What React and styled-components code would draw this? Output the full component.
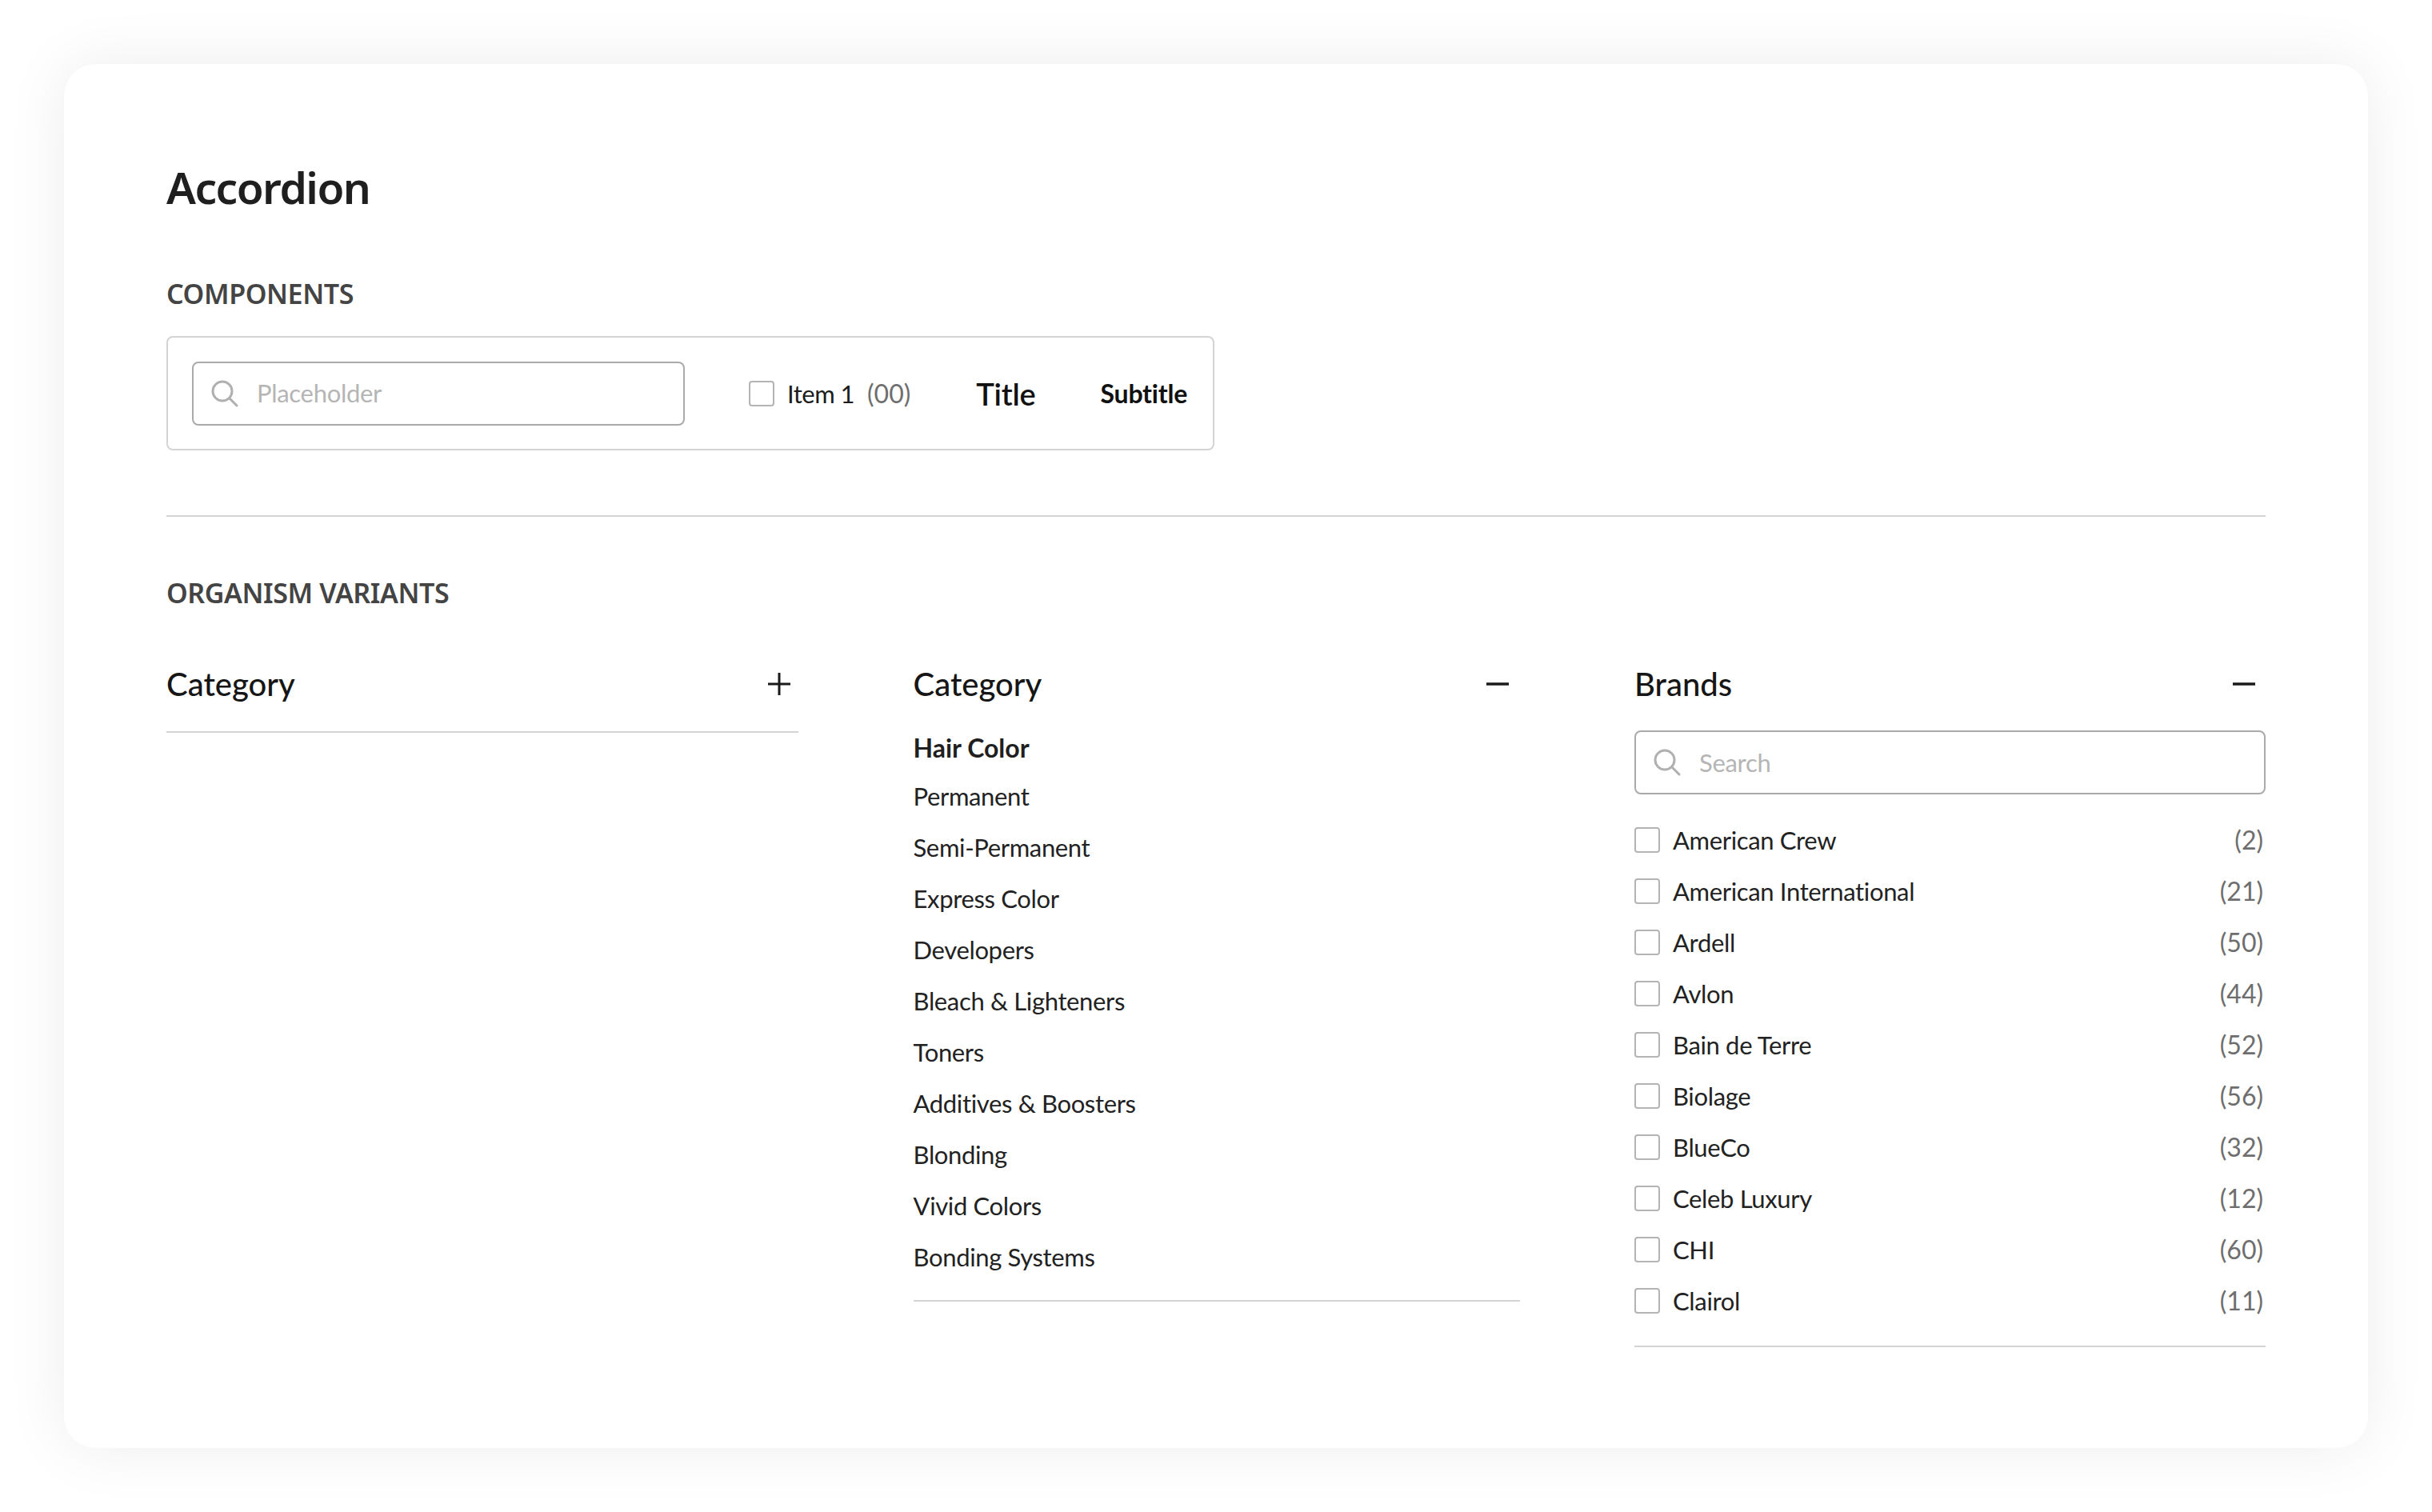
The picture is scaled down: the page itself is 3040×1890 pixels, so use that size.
import React from 'react';
import styled, { createGlobalStyle } from 'styled-components';

const Global = createGlobalStyle`
  html, body { margin: 0; padding: 0; background: #fff; }
  body { font-family: "Lato", "Liberation Sans", sans-serif; color: #1c1c1c; }
`;
const Page = styled.div`
  width: 3040px; height: 1890px; box-sizing: border-box; padding: 80px; overflow: hidden;
`;
const Card = styled.main`
  width: 2880px; height: 1730px; box-sizing: border-box; background: #fff; border-radius: 40px;
  box-shadow: 0 0 80px rgba(0,0,0,0.075);
  padding: 117px 128px 0 128px; display: flex; flex-direction: column;
`;
const Heading = styled.h1`
  margin: 0; font: 600 55px/74px "Noto Sans", sans-serif; letter-spacing: -1.5px; color: #1f1f1f;
`;
const SectionLabel = styled.h2`
  margin: ${p => p.$top}px 0 0; font: 600 34px/44px "Noto Sans", sans-serif; color: #444; letter-spacing: -0.4px;
`;
const Panel = styled.section`
  margin-top: 31px; width: 1310px; height: 143px; box-sizing: border-box; border: 2px solid #d4d4d4; border-radius: 8px;
  padding: 0 30px; display: flex; align-items: center;
`;
const SearchBox = styled.div`
  width: ${p => p.$width}; height: 80px; box-sizing: border-box; border: 2px solid #aaa; border-radius: 8px; flex: none;
  display: flex; align-items: center; padding-left: 21px; gap: 22px;
  font: 400 31px/1 "Lato", sans-serif; letter-spacing: -0.3px; color: #b5b5b5;
`;
const Box = styled.span`
  width: 32px; height: 32px; box-sizing: border-box; flex: none; border: 2px solid #b4b4b4; border-radius: 4px; display: block;
`;
const SampleItem = styled.div`
  margin-left: 80px; display: flex; align-items: center; font: 400 31px/44px "Lato", sans-serif; letter-spacing: -0.5px; white-space: pre;
`;
const Count = styled.span`
  color: #6e6e6e; font: 400 32px/44px "Lato", sans-serif; letter-spacing: 0;
`;
const SampleLabel = styled.span`margin: 0 16px;`;
const SampleTitle = styled.span`
  margin-left: 82px; font: 600 38px/50px "Lato", sans-serif; letter-spacing: -0.2px; color: #111;
`;
const SampleSubtitle = styled.span`
  margin-left: 81px; font: 700 32px/44px "Lato", sans-serif; letter-spacing: -0.2px; color: #111;
`;
const Divider = styled.hr`
  margin: 81px 0 0; border: 0; height: 2px; background: #d4d4d4; width: 100%;
`;
const Columns = styled.div`
  margin-top: 64px; display: grid; grid-template-columns: 790px 758px 789px; justify-content: space-between; align-items: start;
`;
const Col = styled.section`
  display: flex; flex-direction: column;
`;
const ColHeader = styled.header`
  height: 56px; display: flex; align-items: center; justify-content: space-between; padding-right: ${p => p.$pad}px;
  font: 500 40px/56px "Lato", sans-serif; color: #161616;
`;
const ToggleIcon = styled.svg`
  width: 28px; height: 28px; display: block; flex: none;
`;
const Rule = styled.div`
  height: 2px; background: #d4d4d4; margin-top: ${p => p.$top}px;
`;
const ListHead = styled.div`
  margin-top: 30px; font: 700 32px/44px "Lato", sans-serif; color: #1f1f1f;
`;
const Links = styled.ul`
  list-style: none; margin: 16px 0 0; padding: 0; display: flex; flex-direction: column; gap: 20px;
`;
const LinkRow = styled.li`
  font: 400 31px/44px "Lato", sans-serif; letter-spacing: -0.35px; color: #222;
`;
const SearchWrap = styled.div`margin-top: 30px;`;
const Brands = styled.ul`
  list-style: none; margin: 35px 0 0; padding: 0 3px 0 0; display: flex; flex-direction: column; gap: 20px;
`;
const BrandRow = styled.li`
  height: 44px; display: flex; align-items: center; gap: 16px; font: 400 31px/44px "Lato", sans-serif; letter-spacing: -0.35px; color: #222;
`;
const BrandName = styled.span`flex: 1;`;

const Magnifier = () => (
  <svg width="36" height="36" viewBox="0 0 36 36" fill="none" stroke="#b0b0b0" strokeWidth="3" strokeLinecap="round">
    <circle cx="15" cy="15" r="12" />
    <path d="M24 24l9 9" />
  </svg>
);
const Plus = () => (
  <ToggleIcon viewBox="0 0 28 28" fill="none" stroke="#1a1a1a" strokeWidth="3"><path d="M0 14h28M14 0v28" /></ToggleIcon>
);
const Minus = () => (
  <ToggleIcon viewBox="0 0 28 28" fill="none" stroke="#1a1a1a" strokeWidth="3.5"><path d="M0 14h28" /></ToggleIcon>
);

const categories = ['Permanent','Semi-Permanent','Express Color','Developers','Bleach & Lighteners','Toners','Additives & Boosters','Blonding','Vivid Colors','Bonding Systems'];
const brands = [['American Crew',2],['American International',21],['Ardell',50],['Avlon',44],['Bain de Terre',52],['Biolage',56],['BlueCo',32],['Celeb Luxury',12],['CHI',60],['Clairol',11]];

export default function App() {
  return (
    <Page>
      <Global />
      <Card>
        <Heading>Accordion</Heading>
        <SectionLabel $top={74}>COMPONENTS</SectionLabel>
        <Panel>
          <SearchBox $width="616px"><Magnifier />Placeholder</SearchBox>
          <SampleItem><Box /><SampleLabel>Item 1</SampleLabel><Count>(00)</Count></SampleItem>
          <SampleTitle>Title</SampleTitle>
          <SampleSubtitle>Subtitle</SampleSubtitle>
        </Panel>
        <Divider />
        <SectionLabel $top={73}>ORGANISM VARIANTS</SectionLabel>
        <Columns>
          <Col>
            <ColHeader $pad={10}>Category<Plus /></ColHeader>
            <Rule $top={31} />
          </Col>
          <Col>
            <ColHeader $pad={14}>Category<Minus /></ColHeader>
            <ListHead>Hair Color</ListHead>
            <Links>{categories.map(c => <LinkRow key={c}>{c}</LinkRow>)}</Links>
            <Rule $top={32} />
          </Col>
          <Col>
            <ColHeader $pad={13}>Brands<Minus /></ColHeader>
            <SearchWrap><SearchBox $width="100%"><Magnifier />Search</SearchBox></SearchWrap>
            <Brands>
              {brands.map(([n, c]) => (
                <BrandRow key={n}><Box /><BrandName>{n}</BrandName><Count>({c})</Count></BrandRow>
              ))}
            </Brands>
            <Rule $top={34} />
          </Col>
        </Columns>
      </Card>
    </Page>
  );
}
